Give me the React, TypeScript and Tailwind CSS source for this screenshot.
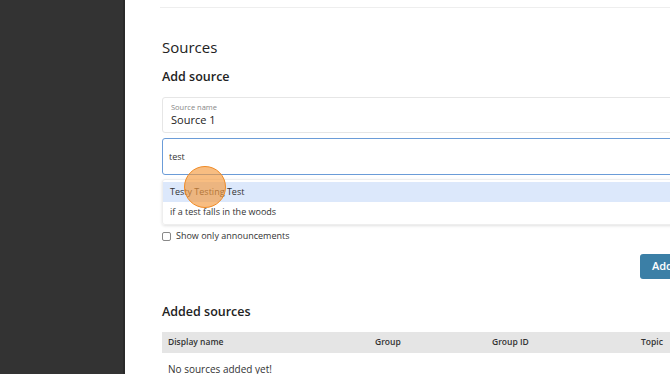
import React from 'react';

const columns = [
  { label: 'Display name', width: 'w-[207px]' },
  { label: 'Group', width: 'w-[117px]' },
  { label: 'Group ID', width: 'w-[149px]' },
  { label: 'Topic', width: 'w-[80px]' },
];

const suggestions = ['Testy Testing Test', 'if a test falls in the woods'];

const App = () => {
  return (
    <div
      className="flex h-[374px] w-[670px] overflow-hidden bg-white text-[#222]"
      style={{ fontFamily: '"Open Sans", "Noto Sans", sans-serif' }}
    >
      {/* sidebar */}
      <aside className="h-full w-[125px] shrink-0 border-r-2 border-[#2a2a2a] bg-[#333333]" />

      <main className="min-w-0 flex-1 pl-[35px]">
        <div className="h-[8px] w-[600px] border-b border-[#eeeeee]" />

        <div className="relative w-[560px] pt-[29px] pl-[2px]">
          <h1 className="text-[15px] leading-[20px] font-medium">Sources</h1>
          <h2 className="mt-[11px] text-[12.5px] leading-[18px] font-semibold">Add source</h2>

          {/* source name field */}
          <div className="mt-[11px] h-[36px] rounded-[3px] border border-[#e6e6e6] px-[8px] pt-[4px]">
            <div className="text-[7.5px] leading-[10px] text-[#888]">Source name</div>
            <div className="text-[11px] leading-[16px] text-[#222]">Source 1</div>
          </div>

          {/* search input */}
          <div className="mt-[5px] flex h-[37px] items-center rounded-[3px] border-[1.5px] border-[#6b9cd8] px-[6px] text-[9px] text-[#333]">
            test
          </div>

          {/* dropdown */}
          <div className="mt-[4px] rounded-[3px] border border-[#eeeeee] py-[2px] shadow-[0_1px_3px_rgba(0,0,0,0.12)]">
            {suggestions.map((s, i) => (
              <div
                key={s}
                className={`flex h-[20px] items-center px-[7px] text-[9px] text-[#333] ${i === 0 ? 'bg-[#dce8fb]' : ''}`}
              >
                {s}
              </div>
            ))}
          </div>

          {/* checkbox */}
          <label className="mt-[5px] flex items-center gap-[5px] text-[9px] leading-[12px] text-[#333]">
            <span className="h-[9px] w-[9px] rounded-[2px] border border-[#888] bg-white" />
            Show only announcements
          </label>

          <div className="mt-[12px] flex">
            <button className="ml-[478px] h-[25px] shrink-0 whitespace-nowrap rounded-[3px] bg-[#3b7fa6] px-[12px] text-[11px] font-semibold text-white">
              Add source
            </button>
          </div>

          <h2 className="mt-[24px] text-[12.5px] leading-[18px] font-semibold">Added sources</h2>

          {/* table */}
          <div className="mt-[11px] flex h-[21px] items-center bg-[#e5e5e5] pl-[6px] text-[8.5px] font-semibold text-[#333]">
            {columns.map((c) => (
              <div key={c.label} className={`${c.width} shrink-0`}>
                {c.label}
              </div>
            ))}
          </div>
          <div className="pt-[9px] pl-[6px] text-[10px] leading-[14px] text-[#333]">No sources added yet!</div>

          {/* click indicator */}
          <div className="absolute top-[158px] left-[24px] h-[42px] w-[42px] rounded-full border-[1.5px] border-[#f08a24] bg-[#f59a3e]/65" />
        </div>
      </main>
    </div>
  );
};

export default App;
